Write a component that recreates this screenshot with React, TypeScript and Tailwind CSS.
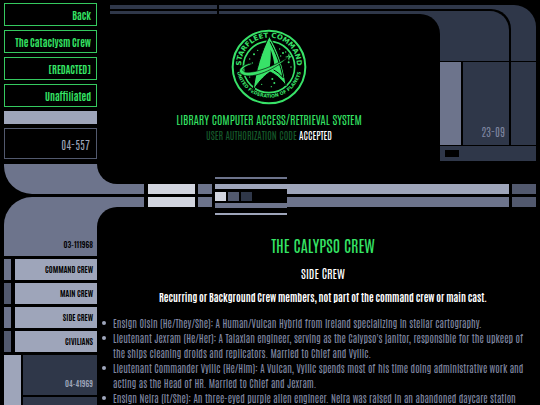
import { ReactNode } from 'react';

const topLinks = ['Back', 'The Cataclysm Crew', '[REDACTED]', 'Unaffiliated'];

const sections = [
  { label: 'COMMAND CREW', accent: 'bg-[#6d748c]' },
  { label: 'MAIN CREW', accent: 'bg-[#52596e]' },
  { label: 'SIDE CREW', accent: 'bg-[#6d748c]' },
  { label: 'CIVILIANS', accent: 'bg-[#52596e]' },
];

const crew = [
  'Ensign Oisin (He/They/She): A Human/Vulcan Hybrid from Ireland specializing in stellar cartography.',
  "Lieutenant Jexram (He/Her): A Talaxian engineer, serving as the Calypso's janitor, responsible for the upkeep of the ships cleaning droids and replicators. Married to Chief and Vyllic.",
  'Lieutenant Commander Vyllic (He/Him): A Vulcan, Vyllic spends most of his time doing administrative work and acting as the Head of HR. Married to Chief and Jexram.',
  'Ensign Neira (It/She): An three-eyed purple alien engineer. Neira was raised in an abandoned daycare station',
];

function Emblem() {
  return (
    <svg viewBox="32 22 228 228" className="h-19 w-19" role="img" aria-label="Starfleet Command">
      <defs>
        <path id="arc-top" d="M 64 150 A 84 84 0 1 1 228 150" />
        <path id="arc-bottom" d="M 48 130 A 98 98 0 1 0 244 130" />
      </defs>
      <circle cx="146" cy="136" r="109" fill="none" stroke="#38e268" strokeWidth="6" />
      <circle cx="146" cy="136" r="77" fill="none" stroke="#38e268" strokeWidth="5" />
      <g fill="#38e268" fontFamily="DejaVu Sans, sans-serif" fontWeight="bold" textAnchor="middle">
        <text fontSize="21">
          <textPath href="#arc-top" startOffset="50%">STARFLEET COMMAND</textPath>
        </text>
        <text fontSize="14">
          <textPath href="#arc-bottom" startOffset="50%">UNITED FEDERATION OF PLANETS</textPath>
        </text>
      </g>
      {/* stars */}
      <g fill="#38e268">
        <circle cx="112" cy="86" r="2" />
        <circle cx="101" cy="98" r="3" />
        <circle cx="88" cy="112" r="2" />
        <circle cx="96" cy="124" r="2" />
        <circle cx="178" cy="82" r="2" />
        <circle cx="188" cy="94" r="3" />
        <circle cx="181" cy="103" r="2" />
        <circle cx="196" cy="91" r="2" />
        <circle cx="205" cy="122" r="3" />
        <circle cx="212" cy="136" r="2" />
        <circle cx="156" cy="172" r="3" />
        <circle cx="162" cy="184" r="3" />
        <circle cx="153" cy="195" r="2" />
        <circle cx="124" cy="188" r="2" />
        <circle cx="88" cy="166" r="2" />
        <path d="M206 94 L208 103 L217 105 L208 108 L206 118 L203 108 L194 106 L203 103 Z" />
      </g>
      {/* delta */}
      <path
        d="M147 44 C124 88 106 146 98 208 C113 182 130 164 149 151 C167 159 182 172 197 192 C190 136 172 84 147 44 Z"
        fill="#38e268"
        stroke="#000"
        strokeWidth="3"
      />
      <path d="M151 84 C156 98 160 112 162 128 C158 132 153 136 148 138 C151 120 152 100 151 84 Z" fill="#000" />
      <path
        d="M149 60 C167 94 181 130 188 168 C178 156 169 150 160 145"
        fill="none"
        stroke="#000"
        strokeWidth="3"
      />
      {/* orbit swoosh */}
      <path
        d="M94 128 C70 136 60 145 74 151 C104 156 160 134 205 106 C164 144 98 172 68 160 C46 150 60 130 94 124 Z"
        fill="#38e268"
        stroke="#000"
        strokeWidth="2"
      />
    </svg>
  );
}

function Squares() {
  return (
    <div className="flex h-[38px] w-18 flex-col justify-between bg-black">
      <div className="h-[2px] bg-[#6d748c]" />
      <div className="flex h-[24px] flex-col justify-between">
        <div className="h-[5px] bg-[#9ea5ba]" />
        <div className="flex gap-[2px]">
          <div className="h-[9px] w-[11px] bg-[#d2d5df]" />
          <div className="h-[9px] w-[11px] bg-[#52596e]" />
          <div className="h-[9px] w-[11px] bg-[#2f3749]" />
        </div>
        <div className="h-[5px] bg-[#6d748c]" />
      </div>
      <div className="h-[2px] bg-[#9ea5ba]" />
    </div>
  );
}

function BarRow({ main, children }: { main: string; children?: ReactNode }) {
  return (
    <div className="flex h-[10px] flex-1 gap-[3px] pl-1">
      <div className="w-[47px] bg-[#d2d5df]" />
      <div className="w-[14px] bg-[#6d748c]" />
      <div className={`relative flex-1 ${main}`}>{children}</div>
      <div className="w-6 bg-[#52596e]" />
    </div>
  );
}

export default function App() {
  return (
    <div className="h-screen overflow-hidden bg-black px-1 pt-[3px] font-['Antonio','Liberation_Sans_Narrow','Roboto_Condensed','Liberation_Sans',sans-serif] text-[10px] leading-[15px] text-[#7f86a0]">
      <div className="flex gap-[13px]">
        <nav className="flex w-[93px] shrink-0 flex-col gap-1">
          {topLinks.map((label) => (
            <a
              key={label}
              href="#"
              className="flex h-[23px] items-center justify-end border border-[#35c95f] pr-[5px] pb-px font-bold whitespace-nowrap text-[#35e565]"
            >
              {label}
            </a>
          ))}
          <div className="h-[13px] bg-[#9ea5ba]" />
          <div className="flex h-[31px] items-center justify-end border border-[#52596e] pr-1.5 text-xs font-light text-[#9ea5ba]">
            04-557
          </div>
        </nav>

        <header className="flex min-w-0 flex-1 pt-[2px]">
          <div className="min-w-0 flex-1">
            <div className="flex gap-[2px]">
              <div className="flex w-[107px] flex-col gap-[2px]">
                <div className="h-1 bg-[#2f3749]" />
                <div className="h-[3px] bg-[#2f3749]" />
              </div>
              <div className="flex flex-1 flex-col gap-[2px]">
                <div className="h-1 bg-[#2f3749]" />
                <div className="h-[3px] bg-[#2f3749]" />
              </div>
            </div>
            <div className="flex flex-col items-center pt-[15px] pl-2 text-center whitespace-nowrap">
              <Emblem />
              <p className="mt-[7px] text-xs leading-[15px] font-light text-[#35e565]">
                LIBRARY COMPUTER ACCESS/RETRIEVAL SYSTEM
              </p>
              <p className="text-[#15592a]">
                USER AUTHORIZATION CODE <span className="text-white">ACCEPTED</span>
              </p>
            </div>
          </div>

          <div className="w-[116px] shrink-0">
            <div className="rounded-tr-[22px] bg-[#2f3749] pt-1 pr-[25px]">
              <div className="rounded-tr-[20px] bg-black pt-[2px] pr-[2px]">
                <div className="rounded-tr-[19px] bg-[#2f3749] pt-[3px] pr-[69px]">
                  <div className="h-[47px] rounded-tr-[20px] bg-black" />
                </div>
              </div>
            </div>
            <div className="mt-px ml-5 flex h-[83px]">
              <div className="w-[21px] bg-[#6d748c]" />
              <div className="ml-[2px] flex flex-1 items-end justify-end bg-[#2f3749] pr-1 pb-1.5 text-xs font-light">
                23-09
              </div>
              <div className="ml-[2px] w-[25px] bg-[#2f3749]" />
            </div>
            <div className="mt-px ml-5 h-[15px] bg-[#2f3749] pt-1 pl-[5px]">
              <div className="h-[7px] w-[14px] bg-black" />
            </div>
          </div>
        </header>
      </div>

      {/* upper sweep */}
      <div className="mt-[3px] flex items-end">
        <div className="h-[30px] w-[93px] shrink-0 rounded-bl-[28px] bg-[#6d748c]" />
        <div className="h-[30px] w-[47px] shrink-0 bg-[#6d748c]">
          <div className="h-5 rounded-bl-[20px] bg-black" />
        </div>
        <BarRow main="bg-[#9ea5ba]">
          <div className="absolute -top-[7px] left-0 z-10">
            <Squares />
          </div>
        </BarRow>
      </div>

      {/* lower sweep */}
      <div className="mt-[3px] flex">
        <aside className="w-[93px] shrink-0 text-right text-[8px] font-bold text-black">
          <div className="flex h-[59px] items-end justify-end rounded-tl-[28px] bg-[#6d748c] pr-1 pb-1">03-111968</div>
          <nav className="mt-[3px] flex flex-col gap-[3px]">
            {sections.map((section) => (
              <a key={section.label} href="#" className="flex h-[21px] gap-1">
                <span className={`w-[7px] ${section.accent}`} />
                <span className="flex flex-1 items-center justify-end bg-[#9ea5ba] pr-1 whitespace-nowrap">
                  {section.label}
                </span>
              </a>
            ))}
          </nav>
          <div className="mt-[3px] flex gap-[2px]">
            <div className="w-[17px] bg-[#9ea5ba]" />
            <div className="flex flex-1 flex-col gap-[2px]">
              <div className="flex h-10 items-end justify-end bg-[#2f3749] pr-1 pb-1 text-[#9ea5ba]">04-41969</div>
              <div className="h-10 bg-[#2f3749]" />
            </div>
          </div>
        </aside>

        <div className="min-w-0 flex-1">
          <div className="flex">
            <div className="h-[10px] w-[47px] shrink-0 bg-[#6d748c]" />
            <BarRow main="bg-[#6d748c]" />
          </div>
          <div className="size-5 bg-[#6d748c]">
            <div className="size-5 rounded-tl-[20px] bg-black" />
          </div>
          <main className="pt-2 pr-1 pl-[5px]">
            <div className="pl-3 text-center leading-5">
              <h1 className="text-base leading-5 text-[#35e565]">THE CALYPSO CREW</h1>
              <h2 className="mt-2 text-xs leading-5 text-white">SIDE CREW</h2>
              <p className="mt-1 font-bold text-white">
                Recurring or Background Crew members, not part of the command crew or main cast.
              </p>
            </div>
            <ul className="mt-2">
              {crew.map((entry) => (
                <li
                  key={entry}
                  className="flex gap-[7px] before:mt-1.5 before:size-1 before:shrink-0 before:rounded-full before:bg-[#9ea5ba]"
                >
                  {entry}
                </li>
              ))}
            </ul>
          </main>
        </div>
      </div>
    </div>
  );
}
